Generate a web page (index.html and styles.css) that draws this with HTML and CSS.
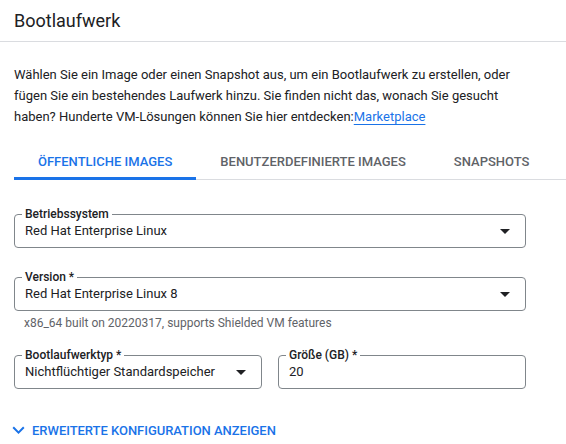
FILE: index.html
```html
<!DOCTYPE html>
<html lang="de">
<head>
<meta charset="utf-8">
<link rel="stylesheet" href="styles.css">
</head>
<body>
<header class="head"><h1 class="title">Bootlaufwerk</h1></header>
<p class="intro">Wählen Sie ein Image oder einen Snapshot aus, um ein Bootlaufwerk zu erstellen, oder fügen Sie ein bestehendes Laufwerk hinzu. Sie finden nicht das, wonach Sie gesucht haben? Hunderte VM-Lösungen können Sie hier entdecken:<a class="link" href="#">Marketplace</a></p>
<nav class="tabs">
  <div class="tab active">ÖFFENTLICHE IMAGES</div>
  <div class="tab">BENUTZERDEFINIERTE IMAGES</div>
  <div class="tab">SNAPSHOTS</div>
</nav>
<div class="form">
  <fieldset class="field">
    <legend class="label">Betriebssystem</legend>
    <div class="value"><span>Red Hat Enterprise Linux</span><span class="arrow"></span></div>
  </fieldset>
  <fieldset class="field f2">
    <legend class="label">Version *</legend>
    <div class="value"><span>Red Hat Enterprise Linux 8</span><span class="arrow"></span></div>
  </fieldset>
  <div class="hint">x86_64 built on 20220317, supports Shielded VM features</div>
  <div class="row">
    <fieldset class="field">
      <legend class="label">Bootlaufwerktyp *</legend>
      <div class="value"><span>Nichtflüchtiger Standardspeicher</span><span class="arrow"></span></div>
    </fieldset>
    <fieldset class="field">
      <legend class="label">Größe (GB) *</legend>
      <div class="value"><span>20</span></div>
    </fieldset>
  </div>
</div>
<div class="expand">
  <svg class="chev" width="13" height="8" viewBox="0 0 12 8"><path d="M1.4 0.6 L6 5.2 L10.6 0.6 L12 2 L6 8 L0 2 Z" fill="#1a73e8"/></svg>
  <span>ERWEITERTE KONFIGURATION ANZEIGEN</span>
</div>
</body>
</html>
```
FILE: styles.css
```css
html, body { margin: 0; padding: 0; background: #fff; }
body { font-family: Roboto, "Noto Sans", Arial, sans-serif; color: #202124; width: 566px; }
.head { height: 42px; border-bottom: 1px solid #dadce0; padding: 0 14px; display: flex; align-items: center; box-sizing: border-box; }
.title { margin: 0; font-size: 18px; font-weight: 400; line-height: 24px; }
.intro { margin: 22px 0 0 14px; width: 520px; font-size: 13px; line-height: 21px; }
.link { color: #1a73e8; text-decoration: underline; text-underline-offset: 3px; }
.tabs { margin: 16px 0 0 14px; display: flex; border-bottom: 1px solid #dadce0; height: 36px; }
.tab { padding: 0 24px; font-size: 13px; font-weight: 500; color: #5f6368; display: flex; align-items: center; height: 36px; box-sizing: border-box; }
.tab.active { color: #1a73e8; border-bottom: 3px solid #1a73e8; padding-top: 3px; height: 37px; margin-bottom: -1px; }
.form { margin: 27px 0 0 14px; width: 512px; }
.field { margin: 0; border: 1px solid #80868b; border-radius: 4px; padding: 0 14px 6px 10px; min-width: 0; }
.label { font-size: 12px; font-weight: 500; line-height: 14px; padding: 0 3px; margin-left: -3px; color: #202124; }
.value { display: flex; align-items: center; justify-content: space-between; font-size: 13px; line-height: 20px; height: 20px; }
.arrow { width: 0; height: 0; border-left: 5px solid transparent; border-right: 5px solid transparent; border-top: 5px solid #202124; margin-right: 1px; }
.f2 { margin-top: 22px; }
.hint { font-size: 12px; line-height: 16px; color: #5f6368; margin: 4px 0 0 10px; }
.row { display: grid; grid-template-columns: 1fr 1fr; gap: 16px; margin-top: 17px; }
.expand { margin: 31px 0 0 12px; display: flex; align-items: center; gap: 7px; color: #1a73e8; font-size: 13px; font-weight: 500; height: 20px; letter-spacing: -0.03px; }
.chev { display: block; }
```
